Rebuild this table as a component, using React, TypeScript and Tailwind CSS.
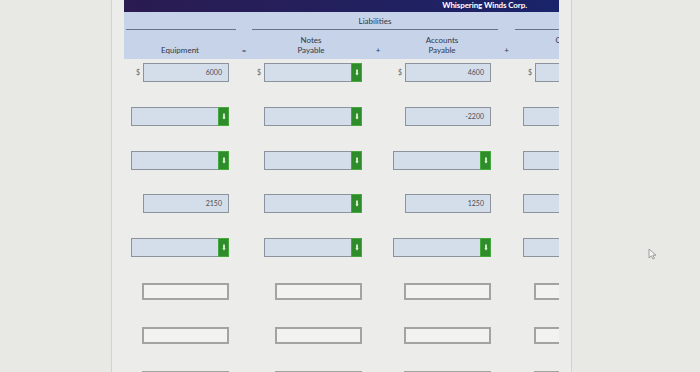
import React from 'react'

type Cell =
  | { kind: 'plain'; value?: string; dollar?: boolean }
  | { kind: 'pick'; dollar?: boolean }
  | { kind: 'blank' }

const cols = 'grid grid-cols-[112px_16px_118px_16px_112px_17px_113px]'

const rows: Cell[][] = [
  [
    { kind: 'plain', value: '6000', dollar: true },
    { kind: 'pick', dollar: true },
    { kind: 'plain', value: '4600', dollar: true },
    { kind: 'plain', dollar: true },
  ],
  [{ kind: 'pick' }, { kind: 'pick' }, { kind: 'plain', value: '-2200' }, { kind: 'pick' }],
  [{ kind: 'pick' }, { kind: 'pick' }, { kind: 'pick' }, { kind: 'pick' }],
  [{ kind: 'plain', value: '2150' }, { kind: 'pick' }, { kind: 'plain', value: '1250' }, { kind: 'pick' }],
  [{ kind: 'pick' }, { kind: 'pick' }, { kind: 'pick' }, { kind: 'pick' }],
  [{ kind: 'blank' }, { kind: 'blank' }, { kind: 'blank' }, { kind: 'blank' }],
  [{ kind: 'blank' }, { kind: 'blank' }, { kind: 'blank' }, { kind: 'blank' }],
  [{ kind: 'blank' }, { kind: 'blank' }, { kind: 'blank' }, { kind: 'blank' }],
]

function Picker() {
  return (
    <div className="h-[19px] w-[98px] border border-[#8c939c] bg-[#d4deeb] flex justify-end">
      <div className="w-[11px] -my-px -mr-px bg-[#2f8c2b] border border-[#45a83d] flex items-center justify-center">
        <svg width="4" height="7" viewBox="0 0 4 7">
          <rect x="1.2" y="0.5" width="1.6" height="4" fill="#f4fff0" />
          <path d="M0.4 4.2 L3.6 4.2 L2 6.6 Z" fill="#f4fff0" />
        </svg>
      </div>
    </div>
  )
}

function Field({ cell }: { cell: Cell }) {
  if (cell.kind === 'blank') {
    return <div className="h-[17px] w-[87px] border-2 border-[#a3a3a1] bg-[#f2f2f0]" />
  }
  const box =
    cell.kind === 'pick' ? (
      <Picker />
    ) : (
      <div className="h-[19px] w-[86px] border border-[#8c939c] bg-[#d4deeb] text-right pr-[6px] text-[7px] leading-[17px] text-[#4a4f57]">
        {cell.value}
      </div>
    )
  return (
    <>
      {cell.dollar && <span className="text-[7px] text-[#5f646b]">$</span>}
      {box}
    </>
  )
}

function Label({ top, bottom }: { top?: string; bottom: string }) {
  return (
    <div className="flex flex-col items-center justify-end pb-[4px] leading-[10px] whitespace-nowrap">
      {top && <span>{top}</span>}
      <span>{bottom}</span>
    </div>
  )
}

export default function App() {
  return (
    <div className="h-[372px] w-[700px] overflow-hidden flex bg-[#e8e8e5] font-['Lato','Open_Sans',sans-serif]">
      <div className="w-[111px] shrink-0" />
      <div className="w-[461px] shrink-0 border-l border-r border-[#d2d2ce] bg-[#ececea] pl-[12px]">
        <div className="w-[435px] overflow-hidden">
          {/* company bar */}
          <div className="h-[12px] bg-gradient-to-r from-[#2a1b51] to-[#19246a] flex items-end justify-end pr-[32px]">
            <span className="text-[8px] font-bold text-white leading-[9px] pb-[2px] tracking-[-0.1px]">
              Whispering Winds Corp.
            </span>
          </div>

          {/* column headings; the last column runs past the panel edge */}
          <div className="w-[504px] h-[47px] bg-[#c6d3e9] text-[8px] text-[#2f3947]">
            <div className={`${cols} h-[18px]`}>
              <div className="ml-[2px] border-b border-[#66748a]" />
              <div />
              <div className="col-span-3 border-b border-[#66748a] flex items-center justify-center">
                Liabilities
              </div>
              <div />
              <div className="border-b border-[#66748a]" />
            </div>
            <div className={`${cols} h-[29px]`}>
              <Label bottom="Equipment" />
              <Label bottom="=" />
              <Label top="Notes" bottom="Payable" />
              <Label bottom="+" />
              <Label top="Accounts" bottom="Payable" />
              <Label bottom="+" />
              <Label top="Common" bottom="Stock" />
            </div>
          </div>

          {/* entry rows */}
          <div className="w-[504px] flex flex-col gap-[24.8px] pt-[4px]">
            {rows.map((row, i) => (
              <div key={i} className={`${cols} h-[19px]`}>
                {row.map((cell, j) => (
                  <React.Fragment key={j}>
                    {j > 0 && <div />}
                    <div
                      className={`flex items-center justify-end gap-[3px] ${j === 1 ? 'pr-[8px]' : 'pr-[7px]'}`}
                    >
                      <Field cell={cell} />
                    </div>
                  </React.Fragment>
                ))}
              </div>
            ))}
          </div>
        </div>
      </div>
      <div className="flex-1 relative">
        <svg className="absolute left-[76px] top-[248px]" width="9" height="12" viewBox="0 0 9 12">
          <path d="M1 1 L1 10 L3.4 7.8 L5 11 L6.4 10.3 L4.9 7.2 L8 7.2 Z" fill="#f4f4f2" stroke="#8a8a88" strokeWidth="0.8" />
        </svg>
      </div>
    </div>
  )
}
